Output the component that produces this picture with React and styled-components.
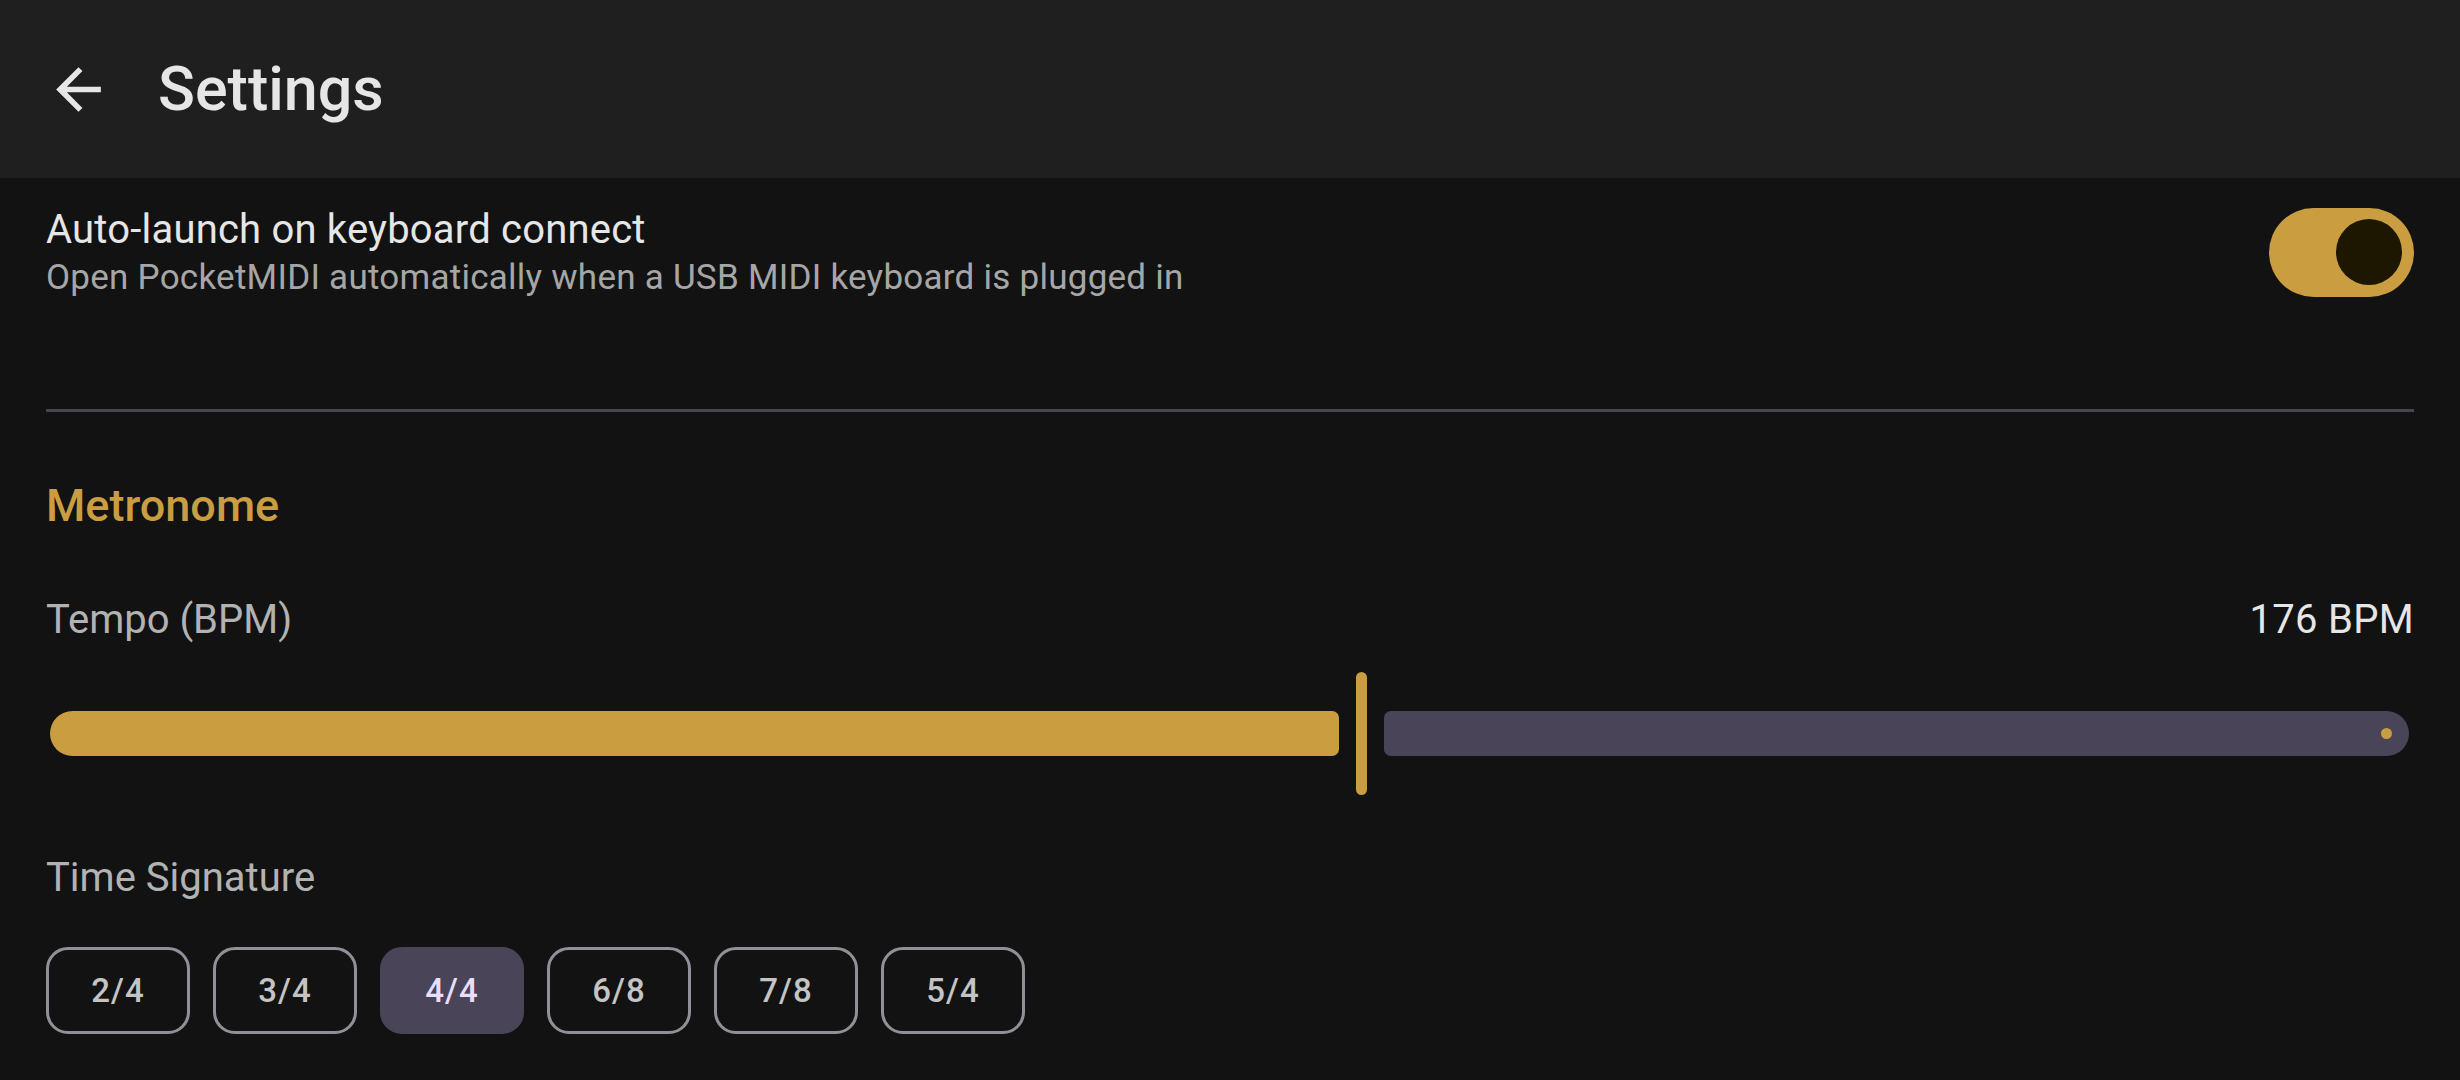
import React, { useState } from 'react';
import styled, { createGlobalStyle } from 'styled-components';

const GlobalStyle = createGlobalStyle`
  html, body {
    margin: 0;
    padding: 0;
    background: #121212;
  }
  body {
    font-family: Roboto, "Noto Sans", "Liberation Sans", sans-serif;
    overflow: hidden;
  }
`;

const GOLD = '#c99d40';

const SIGNATURES = ['2/4', '3/4', '4/4', '6/8', '7/8', '5/4'];

const App = () => {
  const [autoLaunch, setAutoLaunch] = useState(true);
  const [tempo] = useState(176);
  const [signature, setSignature] = useState('4/4');

  // slider range used by the app
  const min = 20;
  const max = 300;
  const frac = (tempo - min) / (max - min);

  return (
    <Screen>
      <GlobalStyle />
      <TopBar>
        <BackButton aria-label="Back">
          <svg viewBox="0 0 24 24" width="67" height="67" fill="#e6e6e6">
            <path d="M20 11H7.83l5.59-5.59L12 4l-8 8 8 8 1.41-1.41L7.83 13H20v-2z" />
          </svg>
        </BackButton>
        <Title>Settings</Title>
      </TopBar>

      <Content>
        <SettingRow>
          <SettingText>
            <SettingTitle>Auto-launch on keyboard connect</SettingTitle>
            <SettingSubtitle>
              Open PocketMIDI automatically when a USB MIDI keyboard is plugged in
            </SettingSubtitle>
          </SettingText>
          <Switch $on={autoLaunch} onClick={() => setAutoLaunch(!autoLaunch)}>
            <SwitchThumb />
          </Switch>
        </SettingRow>

        <Divider />

        <SectionHeading>Metronome</SectionHeading>

        <LabelRow>
          <FieldLabel>Tempo (BPM)</FieldLabel>
          <ValueText>{tempo} BPM</ValueText>
        </LabelRow>

        <Slider>
          <ActiveTrack style={{ flex: `${frac} 1 0` }} />
          <Handle />
          <InactiveTrack style={{ flex: `${1 - frac} 1 0` }}>
            <StopDot />
          </InactiveTrack>
        </Slider>

        <FieldLabel $spaced>Time Signature</FieldLabel>

        <ChipRow>
          {SIGNATURES.map((s) => (
            <Chip key={s} $selected={s === signature} onClick={() => setSignature(s)}>
              {s}
            </Chip>
          ))}
        </ChipRow>
      </Content>
    </Screen>
  );
};

export default App;

const Screen = styled.div`
  width: 2460px;
  height: 1080px;
  background: #121212;
  display: flex;
  flex-direction: column;
  overflow: hidden;
`;

const TopBar = styled.div`
  height: 178px;
  flex-shrink: 0;
  background: #1f1f1f;
  display: flex;
  align-items: center;
  padding-left: 45px;
  gap: 46px;
`;

const BackButton = styled.button`
  width: 67px;
  height: 67px;
  padding: 0;
  border: none;
  background: transparent;
  display: flex;
  align-items: center;
  justify-content: center;
  cursor: pointer;
`;

const Title = styled.h1`
  margin: 0;
  font-size: 61px;
  line-height: 72px;
  font-weight: 500;
  color: #e6e6e6;
`;

const Content = styled.div`
  padding: 26px 46px 0 46px;
  display: flex;
  flex-direction: column;
`;

const SettingRow = styled.div`
  display: flex;
  align-items: center;
  justify-content: space-between;
`;

const SettingText = styled.div`
  display: flex;
  flex-direction: column;
`;

const SettingTitle = styled.div`
  font-size: 40px;
  line-height: 52px;
  color: #e6e6e6;
  letter-spacing: 0.2px;
`;

const SettingSubtitle = styled.div`
  font-size: 35px;
  line-height: 44px;
  color: #a6a6a6;
  letter-spacing: 0.25px;
`;

const Switch = styled.button`
  width: 145px;
  height: 89px;
  border-radius: 45px;
  border: none;
  padding: 0 12px;
  background: ${(p) => (p.$on ? GOLD : '#36343b')};
  display: flex;
  align-items: center;
  justify-content: ${(p) => (p.$on ? 'flex-end' : 'flex-start')};
  cursor: pointer;
`;

const SwitchThumb = styled.span`
  width: 66px;
  height: 66px;
  border-radius: 50%;
  background: #1d1600;
`;

const Divider = styled.div`
  height: 3px;
  background: #49454f;
  margin-top: 109px;
`;

const SectionHeading = styled.h2`
  margin: 66px 0 0;
  font-size: 45px;
  line-height: 56px;
  font-weight: 500;
  color: ${GOLD};
`;

const LabelRow = styled.div`
  margin-top: 60px;
  display: flex;
  justify-content: space-between;
  align-items: baseline;
`;

const FieldLabel = styled.div`
  font-size: 40px;
  line-height: 52px;
  color: #b2b2b2;
  letter-spacing: 0;
  margin-top: ${(p) => (p.$spaced ? '57px' : '0')};
`;

const ValueText = styled.div`
  font-size: 40px;
  line-height: 52px;
  color: #e6e6e6;
  letter-spacing: 0.3px;
`;

const Slider = styled.div`
  margin-top: 26px;
  height: 123px;
  padding: 0 5px 0 4px;
  display: flex;
  align-items: center;
`;

const ActiveTrack = styled.div`
  height: 45px;
  background: ${GOLD};
  border-radius: 23px 7px 7px 23px;
`;

const Handle = styled.div`
  width: 11px;
  height: 123px;
  border-radius: 6px;
  background: ${GOLD};
  margin: 0 17px;
  flex-shrink: 0;
`;

const InactiveTrack = styled.div`
  height: 45px;
  background: #4a4458;
  border-radius: 7px 23px 23px 7px;
  display: flex;
  align-items: center;
  justify-content: flex-end;
`;

const StopDot = styled.span`
  width: 11px;
  height: 11px;
  margin-right: 17px;
  border-radius: 50%;
  background: ${GOLD};
`;

const ChipRow = styled.div`
  margin-top: 43px;
  display: flex;
  gap: 23px;
`;

const Chip = styled.button`
  width: 144px;
  height: 87px;
  box-sizing: border-box;
  border-radius: 22px;
  border: 3px solid ${(p) => (p.$selected ? '#4a4458' : '#938f99')};
  background: ${(p) => (p.$selected ? '#4a4458' : 'transparent')};
  color: ${(p) => (p.$selected ? '#e8def8' : '#c4c4c4')};
  font-family: Roboto, "Noto Sans", "Liberation Sans", sans-serif;
  font-size: 33px;
  font-weight: 500;
  letter-spacing: 1px;
  cursor: pointer;
  padding: 0;
`;
